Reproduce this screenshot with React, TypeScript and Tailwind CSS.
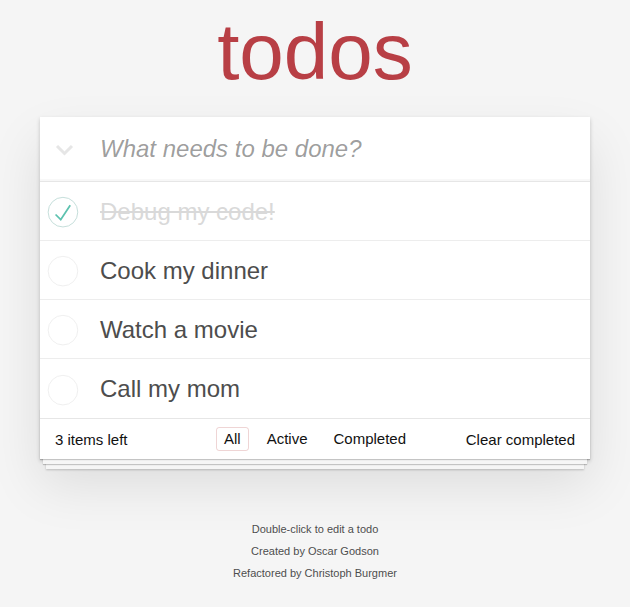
import React from "react";

const FONT = { fontFamily: '"Liberation Sans", Arial, Helvetica, sans-serif' };

function Circle({ done }: { done: boolean }) {
  return (
    <svg width="40" height="40" viewBox="-10 -18 100 135" className="shrink-0">
      <circle cx="50" cy="50" r="50" fill="none" stroke={done ? "#bddad5" : "#ededed"} strokeWidth="3" />
      {done && <path fill="#5dc2af" d="M72 25L42 71 27 56l-4 4 20 20 34-52z" />}
    </svg>
  );
}

const todos = [
  { text: "Debug my code!", done: true },
  { text: "Cook my dinner", done: false },
  { text: "Watch a movie", done: false },
  { text: "Call my mom", done: false },
];

export default function App() {
  return (
    <div className="min-h-screen bg-[#f5f5f5] text-[#111] text-[14px] leading-[1.4]" style={FONT}>
      <h1 className="pt-[12px] text-center text-[80px] leading-[80px] font-extralight text-[#b83f45]">todos</h1>
      <div className="mx-auto mt-[25px] w-[550px] bg-white shadow-[0_2px_4px_rgba(0,0,0,0.2),0_25px_50px_rgba(0,0,0,0.1)]">
        <div className="flex h-[64px] items-center shadow-[inset_0_-2px_1px_rgba(0,0,0,0.03)]">
          <div className="flex h-full w-[60px] shrink-0 items-center pl-[15px] pt-[2px]">
            <svg width="19" height="12" viewBox="0 0 19 12">
              <polyline points="2,2 9.5,9.5 17,2" fill="none" stroke="#e6e6e6" strokeWidth="3" />
            </svg>
          </div>
          <input
            className="h-full flex-1 bg-transparent pr-4 text-[24px] leading-[1.4] text-[#4d4d4d] outline-none placeholder:italic placeholder:text-[rgba(0,0,0,0.4)]"
            placeholder="What needs to be done?"
          />
        </div>
        <ul className="border-t border-[#e6e6e6]">
          {todos.map((t) => (
            <li key={t.text} className="flex h-[59px] items-center border-b border-[#ededed] pt-[2px] last:border-b-0">
              <Circle done={t.done} />
              <span
                className={
                  "ml-[20px] text-[24px] leading-[1.2] " +
                  (t.done ? "text-[#d9d9d9] line-through" : "text-[#4d4d4d]")
                }
              >
                {t.text}
              </span>
            </li>
          ))}
        </ul>
        <footer className="relative grid h-[41px] grid-cols-[1fr_auto_1fr] items-center border-t border-[#e6e6e6] px-[15px] text-[15px] before:pointer-events-none before:absolute before:inset-x-0 before:bottom-0 before:h-[50px] before:overflow-hidden before:content-[''] before:shadow-[0_1px_1px_rgba(0,0,0,0.2),0_8px_0_-3px_#f6f6f6,0_9px_1px_-3px_rgba(0,0,0,0.2),0_16px_0_-6px_#f6f6f6,0_17px_2px_-6px_rgba(0,0,0,0.2)]">
          <span className="relative">3 items left</span>
          <div className="relative flex items-center gap-[10px]">
            <span className="rounded-[3px] border border-[rgba(175,47,47,0.2)] px-[7px] py-[3px] leading-[16px]">All</span>
            <span className="rounded-[3px] border border-transparent px-[7px] py-[3px] leading-[16px]">Active</span>
            <span className="rounded-[3px] border border-transparent px-[7px] py-[3px] leading-[16px]">Completed</span>
          </div>
          <span className="relative justify-self-end">Clear completed</span>
        </footer>
      </div>
      <div className="mt-[65px] flex flex-col items-center gap-[11px] text-[11px] leading-[11px] text-[#4d4d4d] [text-shadow:0_1px_0_rgba(255,255,255,0.5)]">
        <p>Double-click to edit a todo</p>
        <p>Created by Oscar Godson</p>
        <p>Refactored by Christoph Burgmer</p>
      </div>
    </div>
  );
}
